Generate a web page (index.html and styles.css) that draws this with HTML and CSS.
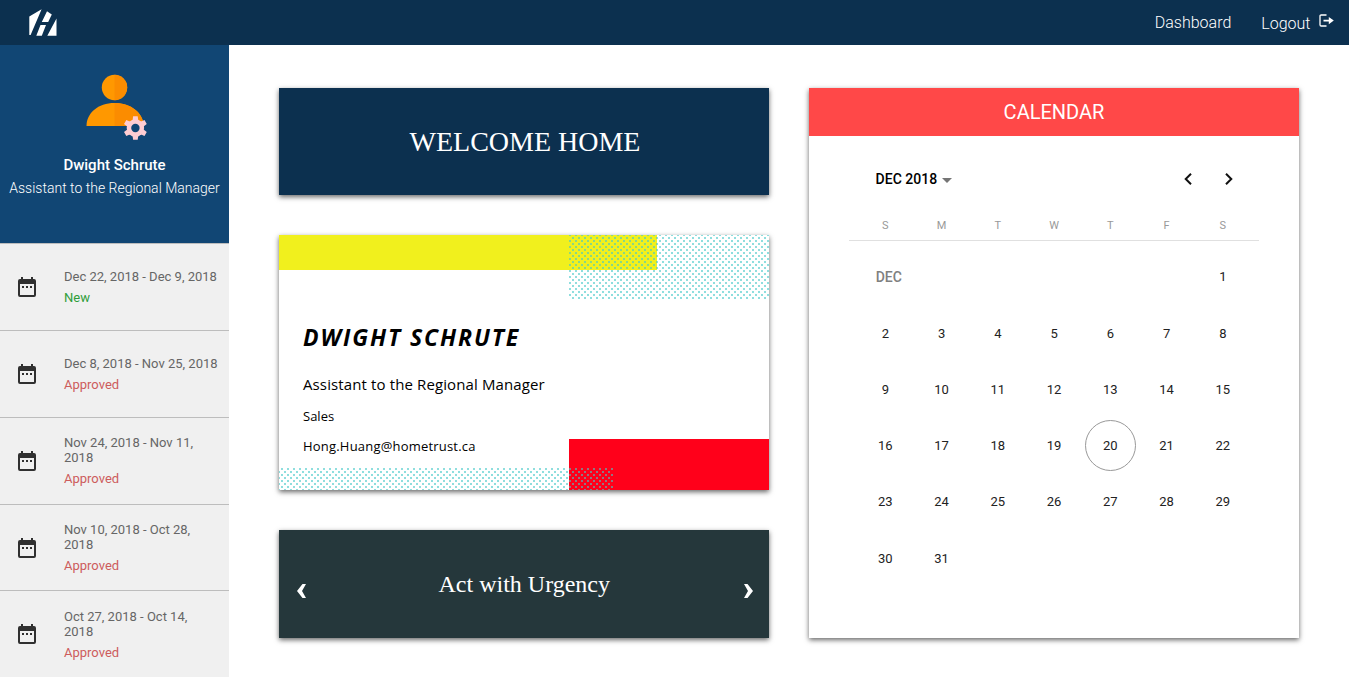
FILE: index.html
```
<!DOCTYPE html>
<html lang="en">
<head>
<meta charset="utf-8">
<title>Dashboard</title>
<link rel="stylesheet" href="styles.css">
</head>
<body>
<svg class="defs" width="0" height="0">
  <symbol id="event" viewBox="0 0 18 20"><path fill-rule="evenodd" d="M3 0h2v2h8V0h2v2h1a2 2 0 0 1 2 2v14a2 2 0 0 1-2 2H2a2 2 0 0 1-2-2V4a2 2 0 0 1 2-2h1zM2 7v11h14V7zM4 9h2v2H4zM8 9h2v2H8zM12 9h2v2h-2z"/></symbol>
  <pattern id="dots" width="6" height="6" patternUnits="userSpaceOnUse"><path d="M2 0h2v1H2zM2 5h2v1H2zM0 2h1v2H0zM5 2h1v2H5z" fill="#44c8c8" fill-opacity=".6" shape-rendering="crispEdges"/></pattern>
</svg>
<header class="topbar">
  <svg class="logo" width="28" height="28" viewBox="0 0 28 28" fill="#fff"><path d="M.3 7.500 12.600.3 1.600 26H.3zM12.800 13 18 2.200 22.800 5.500 19.200 13zM11.500 16h5.500L12.800 26.800H7.300zM27.500 9.500V26.800H18.300z"/></svg>
  <nav class="nav">
    <a class="link">Dashboard</a>
    <a class="link logout">Logout<svg width="15" height="13" viewBox="0 0 15 13"><path d="M7.500 1H2.200Q1 1 1 2.200v8.600Q1 12 2.200 12h5.300" fill="none" stroke="#fff" stroke-width="1.300"/><path d="M4.500 5.700h5.300V3L14.800 6.600 9.800 10.200V7.500H4.500z" fill="#fff"/></svg></a>
  </nav>
</header>
<div class="layout">
  <aside class="sidebar">
    <section class="profile">
      <svg class="avatar" width="62" height="66" viewBox="0 0 62 66"><circle cx="28.500" cy="12.500" r="12.700" fill="#ff9800"/><path d="M28.500-.2a12.700 12.700 0 0 1 0 25.400z" fill="#fb8c00"/><path d="M.5 51C.5 38 12 28 28.500 28S57.500 38 57.500 51z" fill="#ff9800"/><path d="M28.500 28C45 28 57.500 38 57.500 51h-29z" fill="#fb8c00"/><g transform="translate(49.400 53)"><g fill="#ffcdd2"><circle r="8.700"/><path d="M-2.900-7-2.300-11.800H2.300L2.900-7V7L2.300 11.800h-4.600L-2.900 7z"/><path d="M-2.900-7-2.300-11.800H2.300L2.900-7V7L2.300 11.800h-4.600L-2.900 7z" transform="rotate(60)"/><path d="M-2.900-7-2.300-11.800H2.300L2.900-7V7L2.300 11.800h-4.600L-2.900 7z" transform="rotate(120)"/></g><circle r="4.200" fill="#114674"/></g></svg>
      <div class="name">Dwight Schrute</div>
      <div class="role">Assistant to the Regional Manager</div>
    </section>
    <ul class="periods">
      <li class="period"><svg class="event"><use href="#event"/></svg><div><div class="range">Dec 22, 2018 - Dec 9, 2018</div><div class="status new">New</div></div></li>
      <li class="period"><svg class="event"><use href="#event"/></svg><div><div class="range">Dec 8, 2018 - Nov 25, 2018</div><div class="status">Approved</div></div></li>
      <li class="period"><svg class="event"><use href="#event"/></svg><div><div class="range">Nov 24, 2018 - Nov 11, 2018</div><div class="status">Approved</div></div></li>
      <li class="period"><svg class="event"><use href="#event"/></svg><div><div class="range">Nov 10, 2018 - Oct 28, 2018</div><div class="status">Approved</div></div></li>
      <li class="period"><svg class="event"><use href="#event"/></svg><div><div class="range">Oct 27, 2018 - Oct 14, 2018</div><div class="status">Approved</div></div></li>
    </ul>
  </aside>
  <main class="content">
    <div class="column">
      <section class="card welcome">WELCOME HOME</section>
      <section class="card business">
        <div class="band yellow"></div><div class="band red"></div>
        <svg class="dots" width="490" height="255"><path d="M290 0h200v64H290zM0 233h334v22H0z" fill="url(#dots)"/></svg>
        <h2 class="bname">DWIGHT SCHRUTE</h2>
        <p class="btitle">Assistant to the Regional Manager</p>
        <p class="bdept">Sales</p>
        <p class="bmail">Hong.Huang@hometrust.ca</p>
      </section>
      <section class="card quote"><svg width="9" height="14" viewBox="0 0 9 14"><path d="M5.500 0H9L5 7l4 7H5.500L0 7z"/></svg><span>Act with Urgency</span><svg width="9" height="14" viewBox="0 0 9 14"><path d="M3.500 0H0L4 7l-4 7h3.500L9 7z"/></svg></section>
    </div>
    <section class="card calendar">
      <h1 class="caltitle">CALENDAR</h1>
      <div class="controls"><span class="month">DEC 2018</span><i class="caret"></i>
        <svg class="prev" width="8" height="12" viewBox="0 0 8 12"><path d="M7 .7 1.700 6 7 11.300"/></svg>
        <svg width="8" height="12" viewBox="0 0 8 12"><path d="M1 .7 6.300 6 1 11.300"/></svg></div>
      <div class="week"><span>S</span><span>M</span><span>T</span><span>W</span><span>T</span><span>F</span><span>S</span></div>
      <div class="days">
        <span class="label">DEC</span><span class="first">1</span>
        <span>2</span><span>3</span><span>4</span><span>5</span><span>6</span><span>7</span><span>8</span>
        <span>9</span><span>10</span><span>11</span><span>12</span><span>13</span><span>14</span><span>15</span>
        <span>16</span><span>17</span><span>18</span><span>19</span><span class="today">20</span><span>21</span><span>22</span>
        <span>23</span><span>24</span><span>25</span><span>26</span><span>27</span><span>28</span><span>29</span>
        <span>30</span><span>31</span>
      </div>
    </section>
  </main>
</div>
</body>
</html>
```
FILE: styles.css
```
* { box-sizing: border-box; }
body { margin: 0; background: #fff; font-family: Roboto, sans-serif; height: 678px; overflow: hidden; }
.defs { display: block; height: 0; }
.topbar { height: 45px; background: #0c304f; display: flex; justify-content: space-between; padding: 0 15.500px 0 29px; color: #fff; }
.logo { margin-top: 9px; }
.nav { display: flex; gap: 30px; font-size: 16px; font-weight: 300; line-height: 19px; padding-top: 13px; }
.logout { display: flex; padding-top: 1px; }
.logout svg { margin: 0 0 0 8px; }
.layout { display: flex; height: 632px; overflow: hidden; }
.sidebar { width: 229px; flex: none; background: #f0f0f0; }
.profile { height: 198.400px; background: #114674; color: #fff; display: flex; flex-direction: column; align-items: center; padding-top: 30px; }
.avatar { overflow: visible; margin-left: 4px; }
.name { font-size: 15px; font-weight: 500; line-height: 18px; margin-top: 15px; }
.role { font-size: 14px; font-weight: 300; line-height: 16px; margin-top: 6px; white-space: nowrap; }
.periods { list-style: none; margin: 0; padding: 0; border-top: 1px solid #bdbdbd; }
.period { height: 86.750px; border-bottom: 1px solid #bdbdbd; display: flex; align-items: center; padding: 0 11px 0 18px; }
.event { width: 18px; height: 20px; flex: none; margin-right: 28px; fill: #303030; }
.range { font-size: 13px; line-height: 15px; color: #666; }
.status { font-size: 13px; line-height: 15px; margin-top: 6px; color: #cd5c5c; }
.new { color: #2f9e3a; }
.content { display: flex; gap: 40px; padding: 43px 0 0 50px; }
.column { width: 490px; display: flex; flex-direction: column; gap: 40px; }
.card { box-shadow: 0 2px 5px rgba(0, 0, 0, .6); }
.welcome { height: 107px; background: #0c304f; color: #fff; font: 28px/107px "Liberation Serif", serif; text-align: center; padding-left: 2px; }
.business { height: 255px; position: relative; background: #fff; font-family: "Trebuchet MS", "Open Sans", sans-serif; color: #000; padding: 86px 24px 0; }
.band, .dots { position: absolute; }
.yellow { top: 0; left: 0; width: 378px; height: 34.500px; background: #f1f01d; }
.red { right: 0; bottom: 0; width: 200px; height: 51px; background: #ff001a; }
.dots { top: 0; left: 0; }
.bname { margin: 0; font-size: 23px; line-height: 32px; font-style: italic; font-weight: 700; letter-spacing: 1.900px; white-space: nowrap; }
.btitle, .bdept, .bmail { margin: 0; white-space: nowrap; }
.btitle { font-size: 15px; line-height: 20px; margin-top: 21px; letter-spacing: .120px; }
.bdept { font-size: 13px; line-height: 18px; margin-top: 13px; }
.bmail { font-size: 13px; line-height: 18px; margin-top: 12px; letter-spacing: .200px; }
.quote { height: 108px; background: #25373b; color: #fff; display: flex; align-items: center; justify-content: space-between; padding: 0 15.500px 0 18px; font: 24px/108px "Liberation Serif", serif; }
.quote span { margin-left: -2px; }
.quote svg { fill: #fff; margin-top: 13px; }
.calendar { width: 490px; height: 550px; background: #fff; }
.caltitle { margin: 0; height: 48px; background: #ff4848; color: #fff; font-size: 20px; line-height: 49px; font-weight: 400; text-align: center; }
.controls { display: flex; align-items: center; height: 20px; margin: 33px 66px 0 66.600px; font-size: 14px; font-weight: 500; color: #000; }
.caret { margin: 2px auto 0 5px; border: 5px solid transparent; border-top-color: #757575; border-bottom: 0; }
.controls svg { fill: none; stroke: #111; stroke-width: 2; }
.prev { margin-right: 33px; }
.week { display: grid; grid-template-columns: repeat(7, 56.250px); margin: 30px 40px 0; padding: 0 8px 7px 8.250px; border-bottom: 1px solid #e0e0e0; font-size: 11px; line-height: 14px; color: #999; text-align: center; }
.days { display: grid; grid-template-columns: repeat(7, 56.250px); grid-auto-rows: 56.250px; margin: 8.300px 48px 0 48.200px; font-size: 13px; line-height: 56px; text-align: center; color: #222; }
.label { text-align: left; padding-left: 18.500px; color: #808080; font-size: 14px; font-weight: 500; }
.first { grid-column: 7; }
.today { width: 51px; height: 51px; border: 1px solid #999; border-radius: 50%; line-height: 49px; place-self: center; margin-bottom: 1px; }
```
